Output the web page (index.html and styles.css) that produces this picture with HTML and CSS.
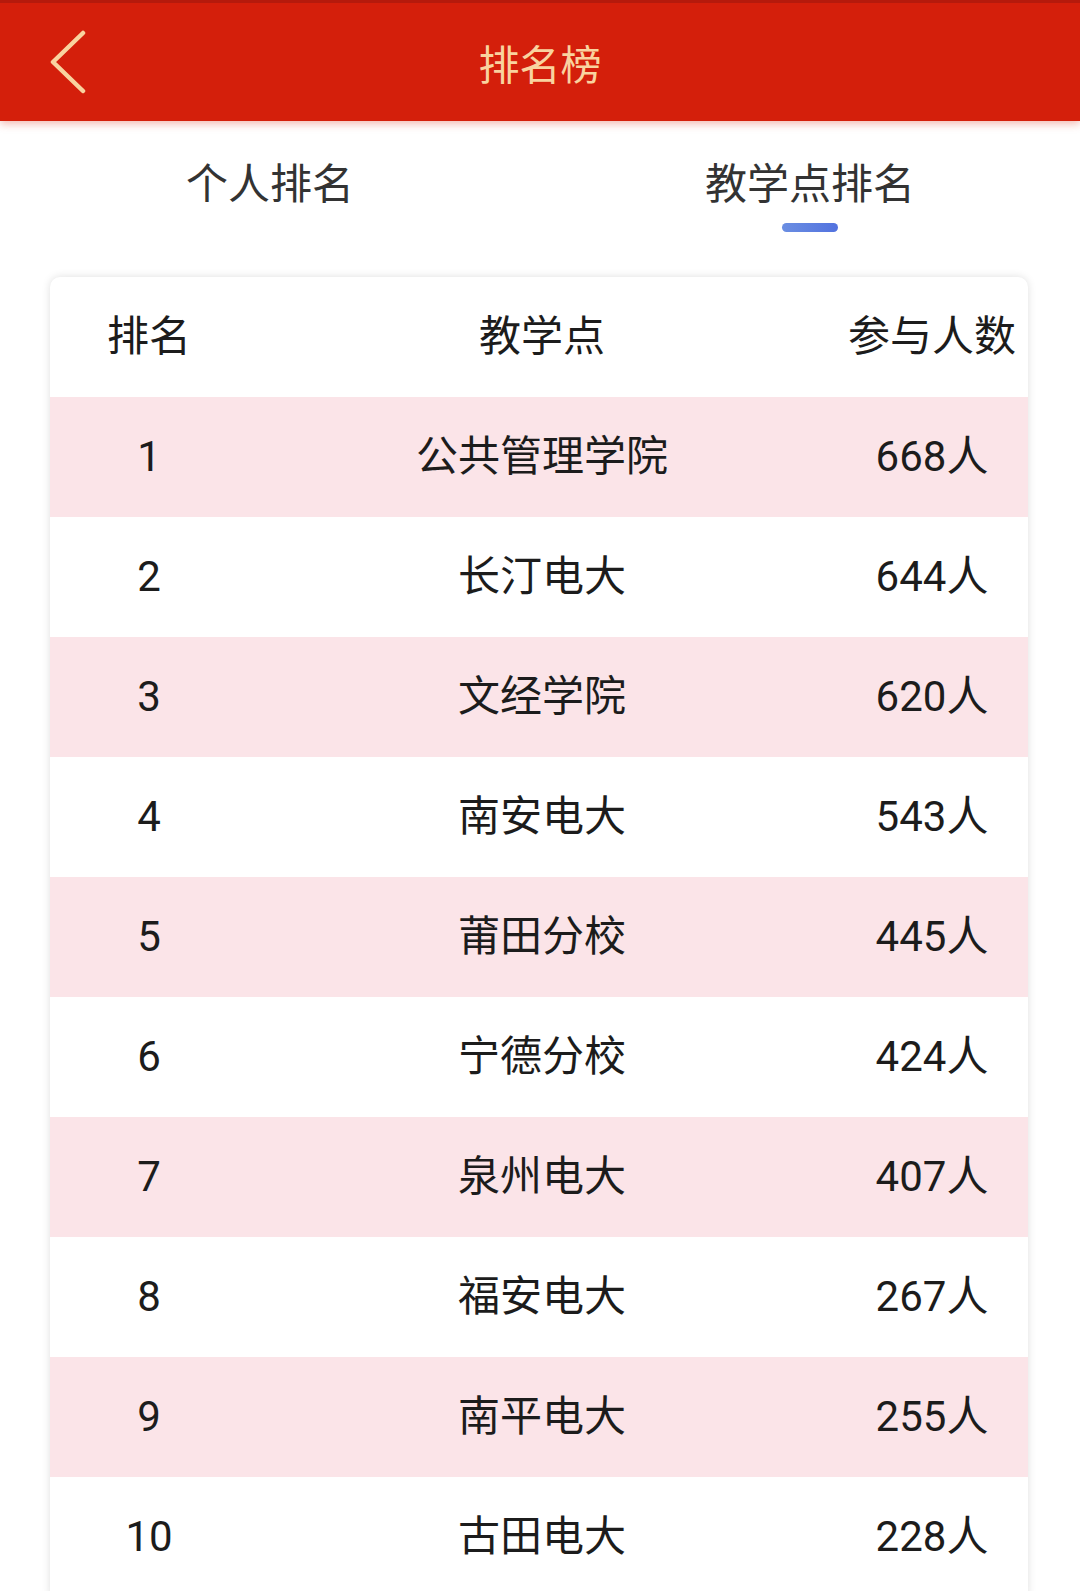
FILE: index.html
```html
<!DOCTYPE html>
<html lang="zh-CN">
<head>
<meta charset="utf-8">
<title>排名榜</title>
<link rel="stylesheet" href="styles.css">
</head>
<body>
<header class="topbar">
  <div class="back">
    <svg width="40" height="64" viewBox="0 0 40 64" aria-hidden="true">
      <polyline points="35,3 5,32 35,61" fill="none" stroke="#f9d39f" stroke-width="4.5" stroke-linecap="round" stroke-linejoin="round"/>
    </svg>
  </div>
  <h1 class="title">排名榜</h1>
  <div class="spacer"></div>
</header>

<nav class="tabs">
  <div class="tab">个人排名</div>
  <div class="tab active">教学点排名<span class="bar"></span></div>
</nav>

<section class="card">
  <div class="row head"><span>排名</span><span>教学点</span><span>参与人数</span></div>
  <div class="row pink"><span>1</span><span>公共管理学院</span><span>668人</span></div>
  <div class="row"><span>2</span><span>长汀电大</span><span>644人</span></div>
  <div class="row pink"><span>3</span><span>文经学院</span><span>620人</span></div>
  <div class="row"><span>4</span><span>南安电大</span><span>543人</span></div>
  <div class="row pink"><span>5</span><span>莆田分校</span><span>445人</span></div>
  <div class="row"><span>6</span><span>宁德分校</span><span>424人</span></div>
  <div class="row pink"><span>7</span><span>泉州电大</span><span>407人</span></div>
  <div class="row"><span>8</span><span>福安电大</span><span>267人</span></div>
  <div class="row pink"><span>9</span><span>南平电大</span><span>255人</span></div>
  <div class="row"><span>10</span><span>古田电大</span><span>228人</span></div>
</section>
</body>
</html>
```

FILE: styles.css
```css
html, body {
  margin: 0;
  padding: 0;
  background: #ffffff;
}
body {
  font-family: "Roboto", "Noto Sans CJK SC", "Noto Sans", sans-serif;
  color: #1c1c1c;
  overflow: hidden;
}
.topbar {
  height: 118px;
  border-top: 3px solid #b51a0c;
  background: #d41f0b;
  display: grid;
  grid-template-columns: 1fr auto 1fr;
  align-items: center;
  box-shadow: 0 3px 8px rgba(220, 60, 40, 0.35);
  position: relative;
  z-index: 2;
}
.back {
  padding-left: 48px;
  display: flex;
  align-items: center;
}
.back svg { display: block; }
.title {
  margin: 0;
  font-size: 41px;
  font-weight: 400;
  color: #f9d39f;
  line-height: 56px;
  font-family: "Noto Sans CJK SC", sans-serif;
}
.tabs {
  display: grid;
  grid-template-columns: 1fr 1fr;
  padding-top: 32px;
  height: 124px;
  box-sizing: border-box;
}
.tab {
  font-size: 42px;
  line-height: 56px;
  color: #333333;
  text-align: center;
  display: flex;
  flex-direction: column;
  align-items: center;
  font-family: "Noto Sans CJK SC", sans-serif;
}
.bar {
  display: block;
  width: 56px;
  height: 9px;
  border-radius: 5px;
  margin-top: 14px;
  background: linear-gradient(90deg, #6b8ee2, #5272df);
}
.card {
  margin: 32px 52px 0 50px;
  background: #ffffff;
  border-radius: 10px 10px 0 0;
  box-shadow: 0 0 8px rgba(0, 0, 0, 0.13);
}
.row {
  display: grid;
  grid-template-columns: 198px 1fr 192px;
  height: 120px;
  align-items: center;
  font-size: 42px;
  line-height: 56px;
  text-align: center;
}
.row span { display: block; white-space: nowrap; }
.head {
  border-radius: 10px 10px 0 0;
}
.pink {
  background: #fbe4e8;
}
```
